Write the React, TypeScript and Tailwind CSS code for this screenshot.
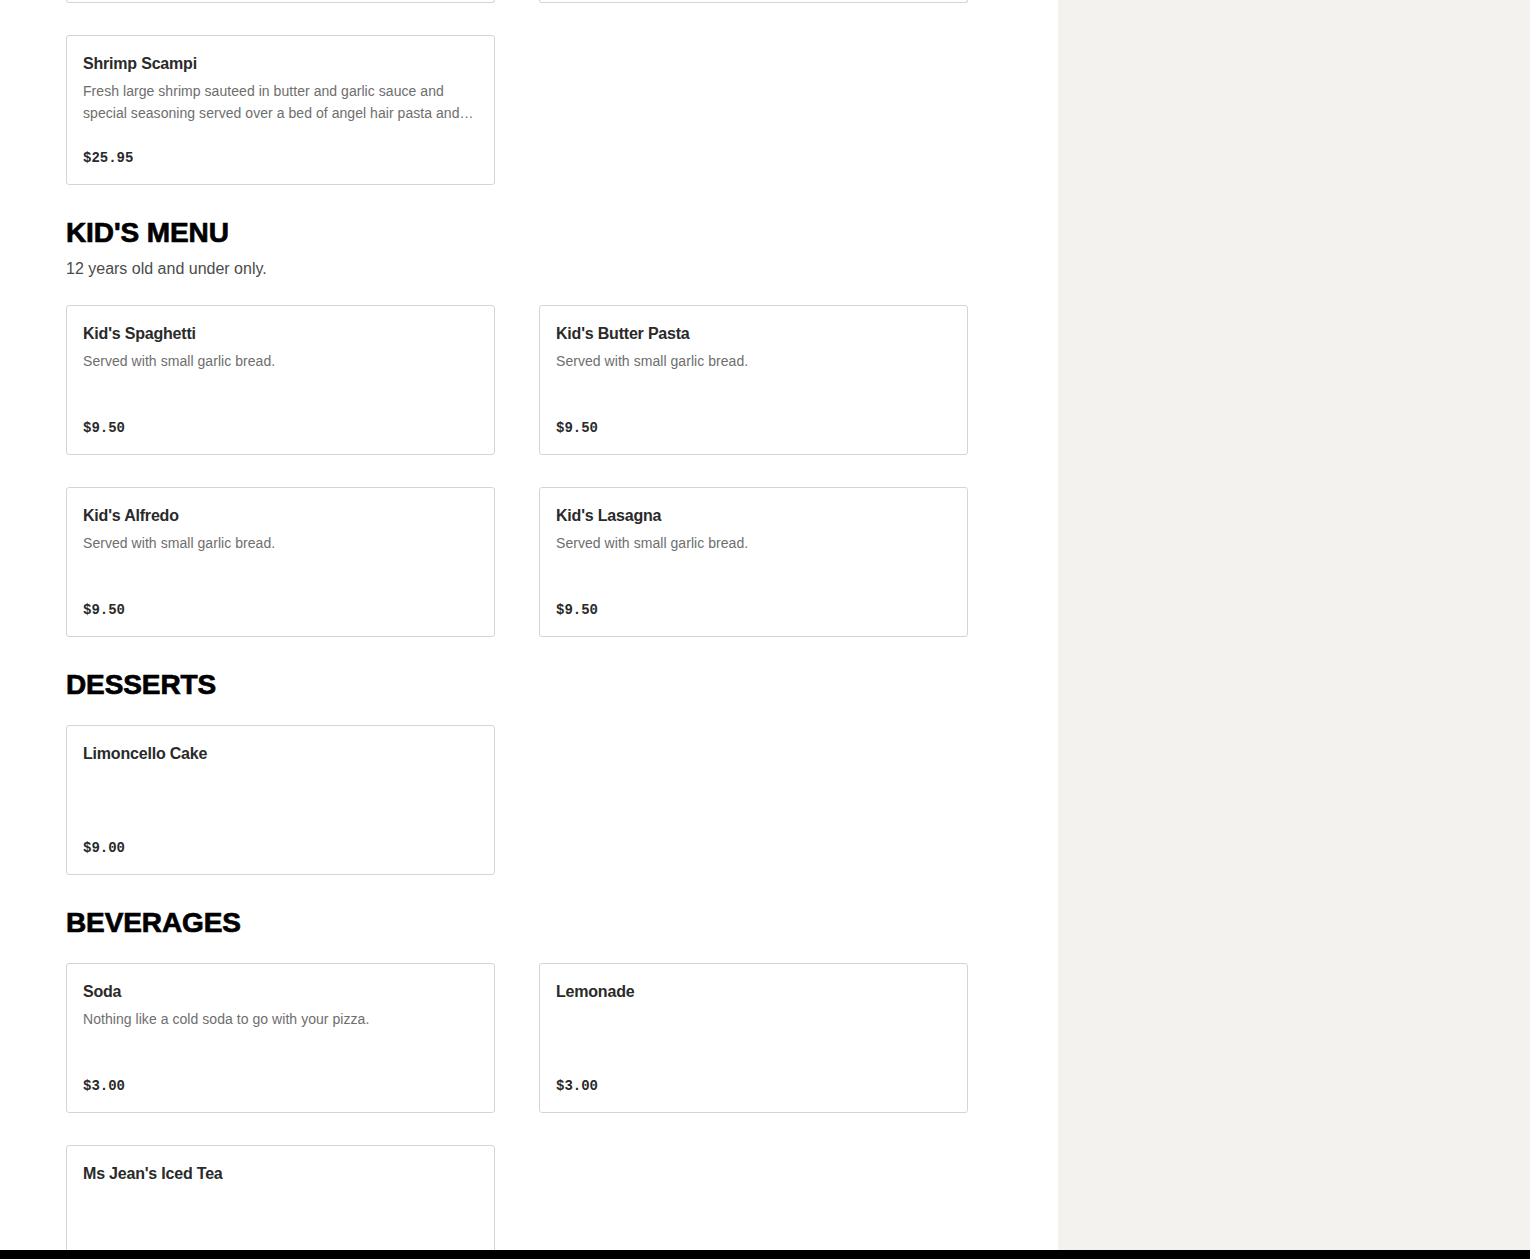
type Item = { name: string; desc?: string; price: string };

type Section = { title?: string; note?: string; items: Item[] };

const sections: Section[] = [
  {
    items: [
      {
        name: "Shrimp Scampi",
        desc: "Fresh large shrimp sauteed in butter and garlic sauce and special seasoning served over a bed of angel hair pasta and fresh vegetables.",
        price: "$25.95",
      },
    ],
  },
  {
    title: "KID'S MENU",
    note: "12 years old and under only.",
    items: [
      { name: "Kid's Spaghetti", desc: "Served with small garlic bread.", price: "$9.50" },
      { name: "Kid's Butter Pasta", desc: "Served with small garlic bread.", price: "$9.50" },
      { name: "Kid's Alfredo", desc: "Served with small garlic bread.", price: "$9.50" },
      { name: "Kid's Lasagna", desc: "Served with small garlic bread.", price: "$9.50" },
    ],
  },
  {
    title: "DESSERTS",
    items: [{ name: "Limoncello Cake", price: "$9.00" }],
  },
  {
    title: "BEVERAGES",
    items: [
      { name: "Soda", desc: "Nothing like a cold soda to go with your pizza.", price: "$3.00" },
      { name: "Lemonade", price: "$3.00" },
      { name: "Ms Jean's Iced Tea", price: "$3.00" },
    ],
  },
];

function MenuCard({ item }: { item: Item }) {
  return (
    <div className="h-[150px] flex flex-col border border-[#d5d5d5] rounded-[3px] bg-white p-4">
      <h3 className="text-[16px] leading-6 font-semibold text-[#2a2a2a] tracking-[-0.2px]">
        {item.name}
      </h3>
      {item.desc && (
        <p className="mt-1 text-[14px] leading-[22px] text-[#6e6e6e] line-clamp-2 tracking-[0.05px]">
          {item.desc}
        </p>
      )}
      <span className="mt-auto text-[14px] leading-5 font-bold text-[#2a2a2a] font-['Liberation_Mono',monospace]">
        {item.price}
      </span>
    </div>
  );
}

function MenuSection({ section }: { section: Section }) {
  return (
    <section className="mt-8 first:mt-0">
      {section.title && (
        <h2 className="text-[28px] leading-8 font-black text-black tracking-[-0.1px] [-webkit-text-stroke:0.7px_black]">
          {section.title}
        </h2>
      )}
      {section.note && (
        <p className="mt-2 text-[16px] leading-6 text-[#4b4b4b]">{section.note}</p>
      )}
      <div className={`grid grid-cols-2 gap-x-11 gap-y-8 ${section.title ? "mt-6" : ""}`}>
        {section.items.map((item) => (
          <MenuCard key={item.name} item={item} />
        ))}
      </div>
    </section>
  );
}

export default function App() {
  return (
    <div className="h-screen flex flex-col overflow-hidden bg-white font-['Liberation_Sans',Arial,sans-serif]">
      <div className="flex flex-1 min-h-0">
        <main className="w-[1058px] shrink-0 overflow-hidden pl-[66px] pr-[90px]">
          {/* bottom edge of the previous row, scrolled past */}
          <div className="grid grid-cols-2 gap-x-11 mb-8">
            <div className="h-[3px] border-x border-b border-[#d5d5d5] rounded-b-[3px]" />
            <div className="h-[3px] border-x border-b border-[#d5d5d5] rounded-b-[3px]" />
          </div>
          {sections.map((s, i) => (
            <MenuSection key={i} section={s} />
          ))}
        </main>
        <aside className="flex-1 bg-[#f3f2ef]" />
      </div>
      <div className="h-[9px] shrink-0 bg-black" />
    </div>
  );
}
